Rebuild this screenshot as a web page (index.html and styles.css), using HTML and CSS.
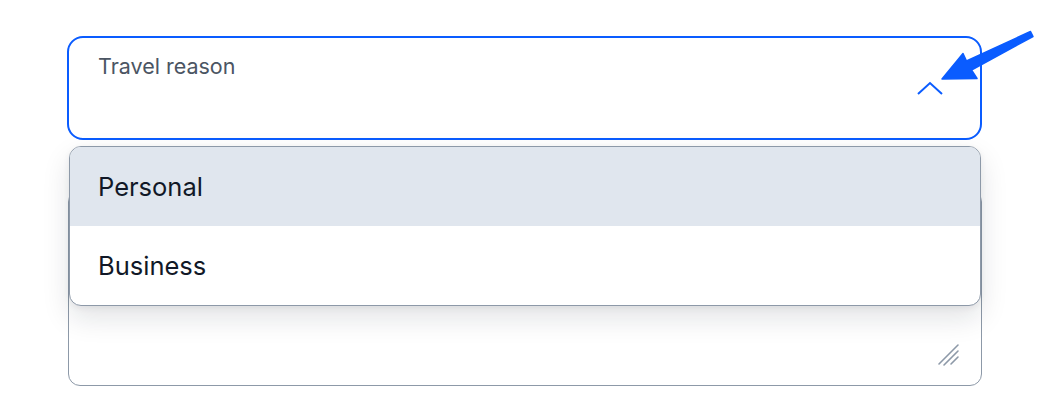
FILE: index.html
```html
<!DOCTYPE html>
<html lang="en">
<head>
<meta charset="utf-8">
<title>Travel reason</title>
<link rel="stylesheet" href="styles.css">
</head>
<body>
<div class="form">
  <div class="select">
    <span class="select-label">Travel reason</span>
    <svg class="chevron" width="28" height="16" viewBox="0 0 28 16" aria-hidden="true">
      <path d="M2 13 L14 2 L26 13" fill="none" stroke="#0a5cff" stroke-width="2"/>
    </svg>
  </div>
  <div class="textarea">
    <svg class="resize" width="24" height="24" viewBox="0 0 24 24" aria-hidden="true">
      <path d="M2 21 L21 2 M7 22 L21 8 M14 21 L21 14" stroke="#8d99a8" stroke-width="1.6" stroke-linecap="round"/>
    </svg>
  </div>
  <ul class="menu">
    <li class="option active">Personal</li>
    <li class="option">Business</li>
  </ul>
</div>
<svg class="pointer" width="105" height="65" viewBox="0 0 105 65" aria-hidden="true">
  <polygon points="7,54 28,28.5 31.5,36 95.5,6.5 98,11.5 36.5,45 42,53.5" fill="#0a5cff" stroke="#0a5cff" stroke-width="1.5" stroke-linejoin="round"/>
</svg>
</body>
</html>
```
FILE: styles.css
```css
* { box-sizing: border-box; }
html, body { margin: 0; padding: 0; background: #fff; }
body {
  width: 1052px;
  height: 404px;
  position: relative;
  overflow: hidden;
  font-family: Inter, "Noto Sans", Arial, sans-serif;
}
.form {
  position: relative;
  margin: 36px 0 0 67px;
  width: 915px;
  display: flex;
  flex-direction: column;
  gap: 50px;
}
.select {
  height: 104px;
  border: 2px solid #0a5cff;
  border-radius: 16px;
  padding: 15px 36px 0 29px;
  position: relative;
}
.select-label {
  display: block;
  font-size: 21.5px;
  line-height: 26px;
  color: #4b5563;
}
.chevron {
  position: absolute;
  right: 36px;
  top: 43px;
}
.textarea {
  margin-left: 1px;
  width: 914px;
  height: 196px;
  border: 1px solid #8d99a8;
  border-radius: 12px;
  position: relative;
}
.resize {
  position: absolute;
  right: 20px;
  bottom: 18px;
}
.menu {
  position: absolute;
  top: 110px;
  left: 2px;
  width: 912px;
  margin: 0;
  padding: 0;
  list-style: none;
  border: 1px solid #8d99a8;
  border-radius: 12px;
  overflow: hidden;
  background: #fff;
  box-shadow: 0 12px 28px rgba(15, 23, 42, 0.12), 0 2px 6px rgba(15, 23, 42, 0.06);
}
.option {
  height: 79px;
  display: flex;
  align-items: center;
  padding-left: 28px;
  font-size: 25.5px;
  color: #111827;
}
.option.active { background: #e0e6ee; }
.pointer {
  position: absolute;
  left: 935px;
  top: 25px;
}
```
